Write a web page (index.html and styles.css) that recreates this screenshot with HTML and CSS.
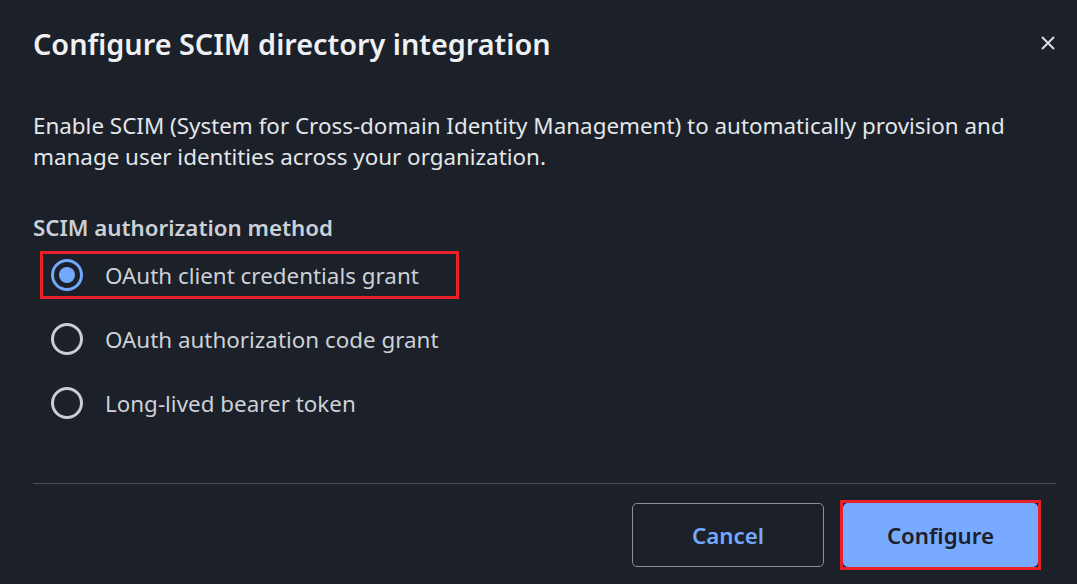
FILE: index.html
```html
<!DOCTYPE html>
<html>
<head>
<meta charset="utf-8">
<link rel="stylesheet" href="styles.css">
</head>
<body>
<div class="dialog">
  <div class="header">
    <h1 class="title">Configure SCIM directory integration</h1>
    <button class="close" aria-label="Close">
      <svg width="16" height="16" viewBox="0 0 16 16"><path d="M2 2 L14 14 M14 2 L2 14" stroke="#d9dde3" stroke-width="2" fill="none"/></svg>
    </button>
  </div>
  <p class="desc">Enable SCIM (System for Cross-domain Identity Management) to automatically provision and manage user identities across your organization.</p>
  <div class="group">
    <div class="group-label">SCIM authorization method</div>
    <div class="options">
      <label class="option selected highlight"><span class="radio"><span class="dot"></span></span><span class="opt-text">OAuth client credentials grant</span></label>
      <label class="option"><span class="radio"></span><span class="opt-text">OAuth authorization code grant</span></label>
      <label class="option"><span class="radio"></span><span class="opt-text">Long-lived bearer token</span></label>
    </div>
  </div>
  <div class="footer">
    <button class="btn btn-cancel">Cancel</button>
    <span class="btn-wrap"><button class="btn btn-primary">Configure</button></span>
  </div>
</div>
</body>
</html>
```

FILE: styles.css
```css
html, body {
  margin: 0;
  padding: 0;
  background: #1b2029;
  width: 1077px;
  height: 584px;
  overflow: hidden;
  font-family: "Noto Sans", "Open Sans", sans-serif;
}
.dialog {
  padding: 0 21px 0 33px;
  box-sizing: border-box;
  width: 1077px;
  height: 584px;
}
.header {
  display: flex;
  align-items: center;
  justify-content: space-between;
  height: 86px;
}
.title {
  margin: 0;
  font-size: 28.8px;
  font-weight: 600;
  color: #eef0f3;
  letter-spacing: 0;
}
.close {
  background: none;
  border: none;
  padding: 0;
  width: 16px;
  height: 16px;
  display: flex;
  cursor: pointer;
}
.desc {
  margin: 24px 0 0 0;
  font-size: 22.4px;
  line-height: 31px;
  color: #e3e6ea;
  max-width: 1000px;
}
.group {
  margin-top: 41px;
}
.group-label {
  font-size: 22.3px;
  font-weight: 600;
  color: #ccd0d6;
  line-height: 30px;
}
.options {
  display: flex;
  flex-direction: column;
  margin-top: 8px;
  gap: 16px;
}
.option {
  display: flex;
  align-items: center;
  height: 48px;
  padding-left: 18px;
  box-sizing: border-box;
  width: fit-content;
  padding-right: 37px;
}
.option.highlight {
  border: 3px solid #e8202a;
  margin-left: 7px;
  padding-left: 8px;
}
.radio {
  width: 26px;
  height: 26px;
  border: 3px solid #c9ced5;
  border-radius: 50%;
  display: flex;
  align-items: center;
  justify-content: center;
  flex: none;
}
.option.selected .radio {
  border-color: #74a8fc;
}
.dot {
  width: 16px;
  height: 16px;
  border-radius: 50%;
  background: #74a8fc;
}
.opt-text {
  margin-left: 22px;
  font-size: 22.4px;
  color: #ccd1d7;
}
.footer {
  margin-top: 56px;
  border-top: 1px solid #4a5059;
  display: flex;
  justify-content: flex-end;
  align-items: center;
  padding-top: 16px;
  gap: 16px;
}
.btn {
  font-family: "Noto Sans", "Open Sans", sans-serif;
  font-size: 22.3px;
  font-weight: 600;
  width: 192px;
  height: 64px;
  border-radius: 5px;
  cursor: pointer;
}
.btn-cancel {
  background: transparent;
  border: 1px solid #8a9099;
  color: #74a8fc;
}
.btn-wrap {
  border: 3px solid #e8202a;
  display: flex;
  margin-right: 15px;
}
.btn-primary {
  background: #78abff;
  border: none;
  color: #1b2029;
  width: 195px;
}
```
